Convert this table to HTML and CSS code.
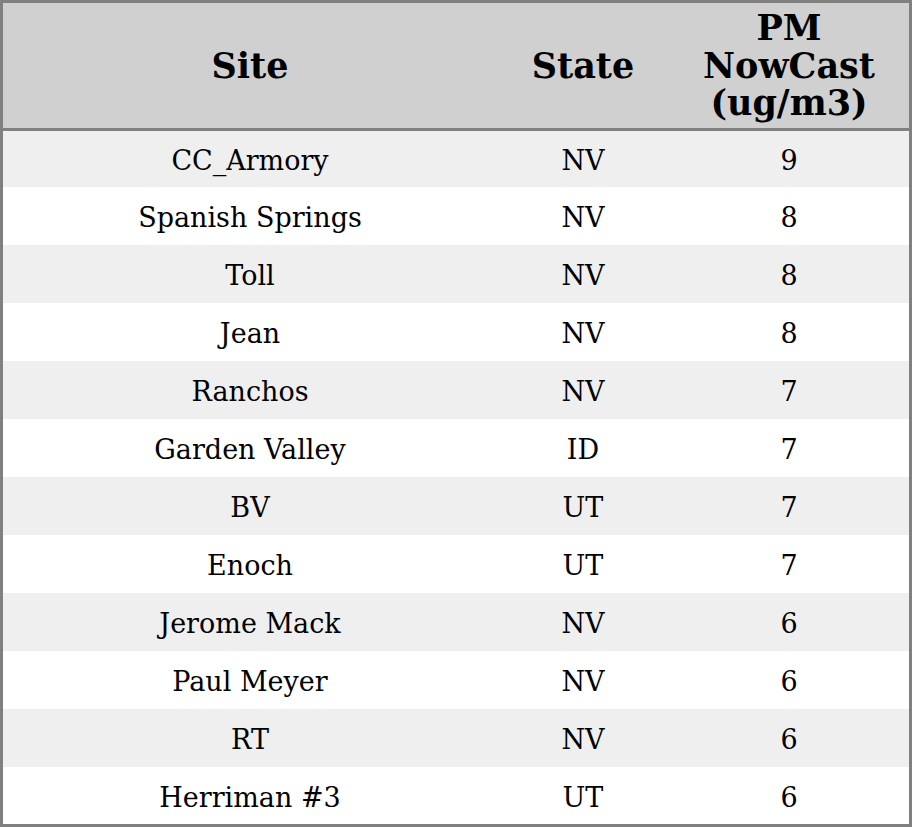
FILE: index.html
```html
<!DOCTYPE html>
<html>
<head>
<meta charset="utf-8">
<link rel="stylesheet" href="styles.css">
</head>
<body>
<table class="aq">
  <thead>
    <tr><th class="c1">Site</th><th class="c2">State</th><th class="c3">PM<br>NowCast<br>(ug/m3)</th></tr>
  </thead>
  <tbody>
    <tr class="first"><td>CC_Armory</td><td>NV</td><td>9</td></tr>
    <tr><td>Spanish Springs</td><td>NV</td><td>8</td></tr>
    <tr><td>Toll</td><td>NV</td><td>8</td></tr>
    <tr><td>Jean</td><td>NV</td><td>8</td></tr>
    <tr><td>Ranchos</td><td>NV</td><td>7</td></tr>
    <tr><td>Garden Valley</td><td>ID</td><td>7</td></tr>
    <tr><td>BV</td><td>UT</td><td>7</td></tr>
    <tr><td>Enoch</td><td>UT</td><td>7</td></tr>
    <tr><td>Jerome Mack</td><td>NV</td><td>6</td></tr>
    <tr><td>Paul Meyer</td><td>NV</td><td>6</td></tr>
    <tr><td>RT</td><td>NV</td><td>6</td></tr>
    <tr class="last"><td>Herriman #3</td><td>UT</td><td>6</td></tr>
  </tbody>
</table>
</body>
</html>
```
FILE: styles.css
```css
html, body { margin: 0; padding: 0; background: #fff; }
body { font-family: "DejaVu Serif", serif; color: #000; }
.aq {
  width: 912px;
  border-collapse: collapse;
  border: 3px solid #808080;
  table-layout: fixed;
}
.aq th {
  background: #d0d0d0;
  font-size: 35px;
  line-height: 37.5px;
  font-weight: bold;
  text-align: center;
  height: 125px;
  padding: 0;
  border-bottom: 3px solid #808080;
}
.c1 { width: 494px; }
.c2 { width: 172px; }
.aq td {
  font-size: 27px;
  text-align: center;
  padding: 3px 0 0;
  height: 55px;
}
.aq tr.first td { height: 53px; }
.aq tr.last td { height: 54px; }
.aq tbody tr:nth-child(odd) td { background: #efefef; }
```
